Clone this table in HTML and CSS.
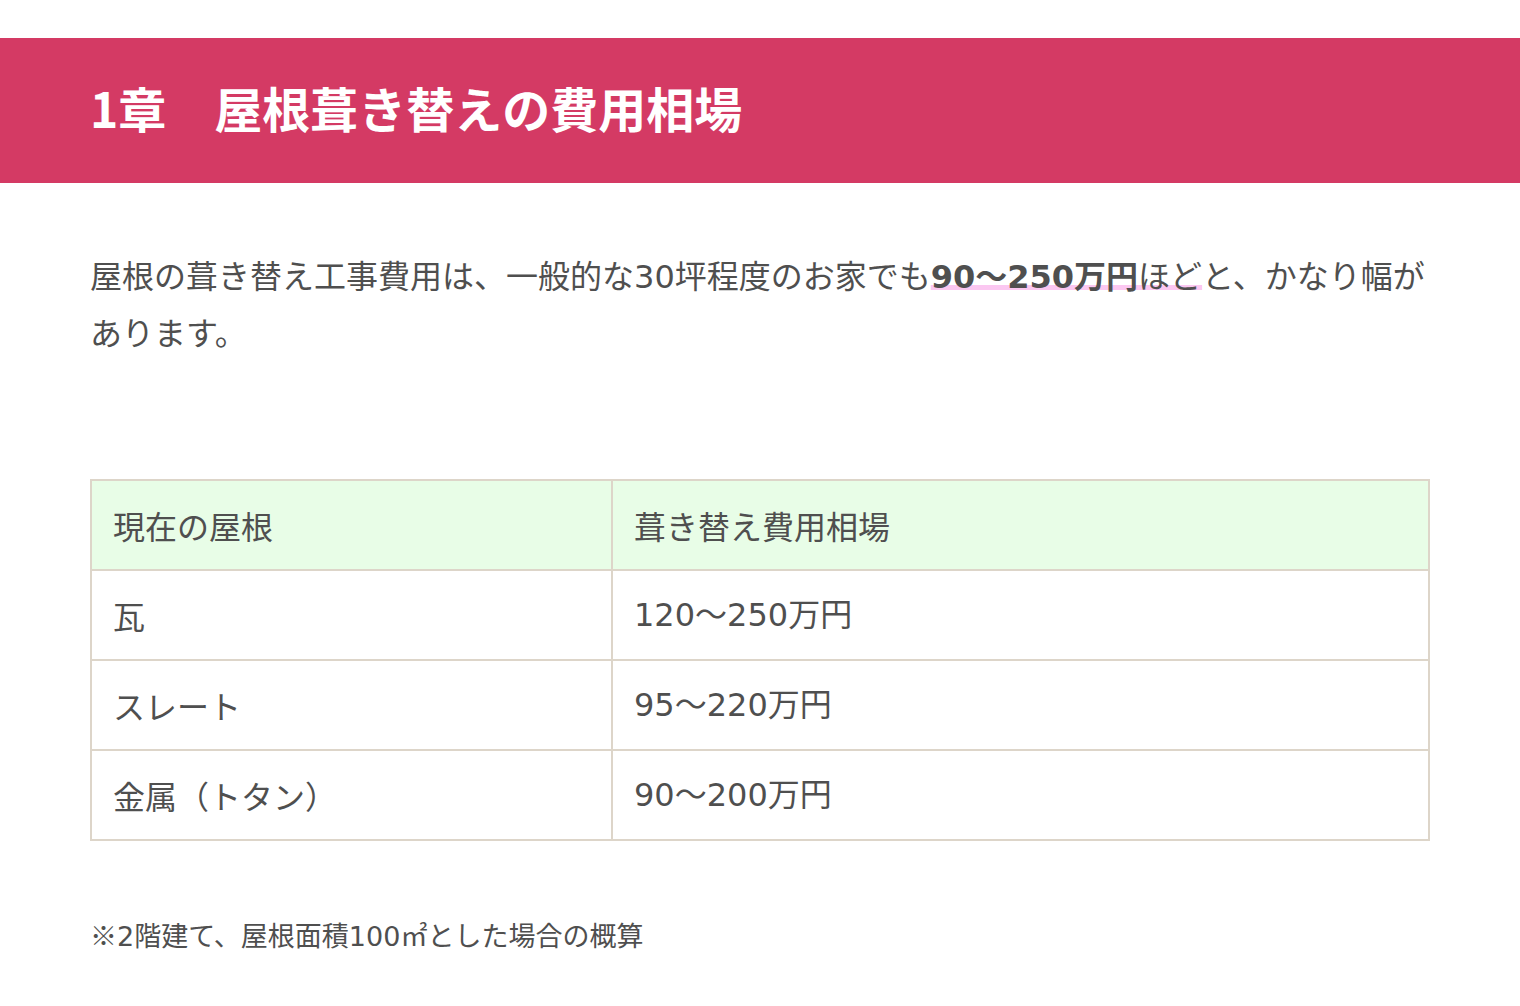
FILE: index.html
```html
<!DOCTYPE html>
<html lang="ja">
<head>
<meta charset="utf-8">
<title>屋根葺き替えの費用相場</title>
<link rel="stylesheet" href="styles.css">
</head>
<body>
<section class="chapter">
  <h2 class="chapter-title">1章　屋根葺き替えの費用相場</h2>
  <div class="content">
    <p class="lead">屋根の葺き替え工事費用は、一般的な<span class="num">30</span>坪程度のお家でも<span class="marker"><strong class="num">90〜250万円</strong>ほど</span>と、かなり幅があります。</p>
    <table class="price-table">
      <thead>
        <tr><th class="col-type">現在の屋根</th><th>葺き替え費用相場</th></tr>
      </thead>
      <tbody>
        <tr><td>瓦</td><td class="num">120〜250万円</td></tr>
        <tr><td>スレート</td><td class="num">95〜220万円</td></tr>
        <tr><td>金属（トタン）</td><td class="num">90〜200万円</td></tr>
      </tbody>
    </table>
    <p class="note">※<span class="num">2</span>階建て、屋根面積<span class="num">100</span>㎡とした場合の概算</p>
  </div>
</section>
</body>
</html>
```
FILE: styles.css
```css
body {
  margin: 0;
  background: #ffffff;
  font-family: "Noto Sans CJK JP", sans-serif;
  color: #4f4f4f;
}

.chapter-title {
  margin: 38px 0 0;
  height: 145px;
  box-sizing: border-box;
  padding: 0 90px 7px;
  display: flex;
  align-items: center;
  background: #d43a64;
  color: #ffffff;
  font-size: 48px;
  font-weight: 700;
  line-height: 1;
}

.content {
  padding: 0 90px;
}

.num {
  font-family: "DejaVu Sans", "Noto Sans CJK JP", sans-serif;
}

.lead {
  margin: 64px 0 0;
  font-size: 32px;
  line-height: 54px;
}

.marker {
  text-decoration: underline 5px #fbc7f1;
  text-underline-offset: -3px;
  text-decoration-skip-ink: none;
}

.marker strong {
  font-weight: 700;
}

.price-table {
  margin-top: 121px;
  width: 100%;
  border-collapse: collapse;
  font-size: 32px;
}

.price-table th,
.price-table td {
  border: 2px solid #ddd5c9;
  height: 90px;
  padding: 0 21px;
  line-height: 48px;
  text-align: left;
  font-weight: 400;
  box-sizing: border-box;
}

.price-table thead th {
  background: #e8fde7;
}

.price-table .col-type {
  width: 521px;
}

.note {
  margin: 72px 0 0;
  font-size: 27px;
  line-height: 44px;
}
```
